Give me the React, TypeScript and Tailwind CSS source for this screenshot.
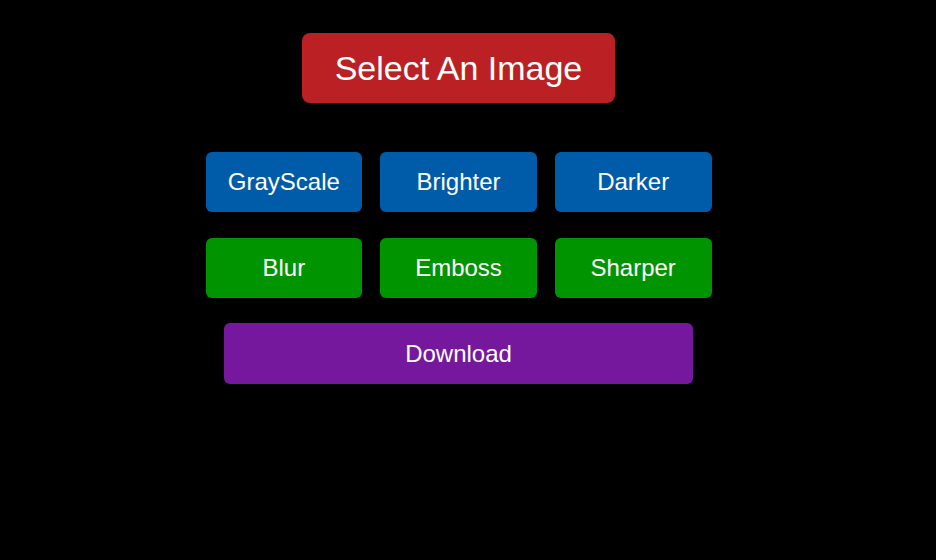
import React from 'react';

const filters = [
  { label: 'GrayScale', tone: 'blue' },
  { label: 'Brighter', tone: 'blue' },
  { label: 'Darker', tone: 'blue' },
  { label: 'Blur', tone: 'green' },
  { label: 'Emboss', tone: 'green' },
  { label: 'Sharper', tone: 'green' },
];

const App: React.FC = () => {
  return (
    <div
      className="min-h-[560px] w-full bg-black flex flex-col items-center pt-[33px] pr-[19px] text-white"
      style={{ fontFamily: '"Liberation Sans", Arial, sans-serif' }}
    >
      <button
        type="button"
        className="w-[313px] h-[70px] rounded-[8px] bg-[#bb2124] text-[34px] leading-none"
      >
        Select An Image
      </button>

      {/* Filters */}
      <div className="mt-[49px] w-[506px] grid grid-cols-3 gap-x-[18px] gap-y-[26px]">
        {filters.map(f => (
          <button
            key={f.label}
            type="button"
            className={`h-[60px] rounded-[6px] text-[24px] leading-none ${
              f.tone === 'blue' ? 'bg-[#005ca8]' : 'bg-[#009400]'
            }`}
          >
            {f.label}
          </button>
        ))}
      </div>

      <button
        type="button"
        className="mt-[25px] w-[469px] h-[61px] rounded-[6px] bg-[#75189e] text-[24px] leading-none"
      >
        Download
      </button>
    </div>
  );
};

export default App;
